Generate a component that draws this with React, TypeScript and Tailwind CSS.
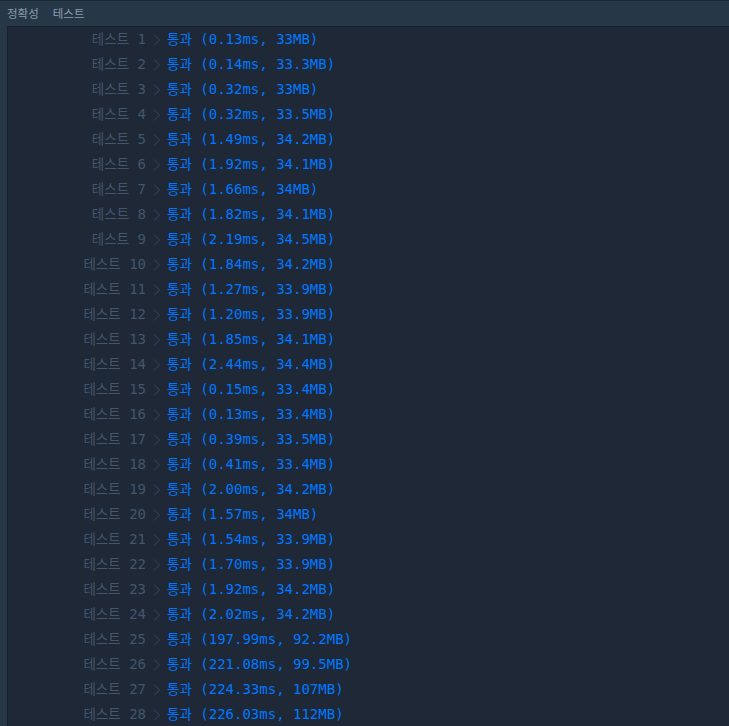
import React from 'react'

const results = [
  ['0.13ms', '33MB'],
  ['0.14ms', '33.3MB'],
  ['0.32ms', '33MB'],
  ['0.32ms', '33.5MB'],
  ['1.49ms', '34.2MB'],
  ['1.92ms', '34.1MB'],
  ['1.66ms', '34MB'],
  ['1.82ms', '34.1MB'],
  ['2.19ms', '34.5MB'],
  ['1.84ms', '34.2MB'],
  ['1.27ms', '33.9MB'],
  ['1.20ms', '33.9MB'],
  ['1.85ms', '34.1MB'],
  ['2.44ms', '34.4MB'],
  ['0.15ms', '33.4MB'],
  ['0.13ms', '33.4MB'],
  ['0.39ms', '33.5MB'],
  ['0.41ms', '33.4MB'],
  ['2.00ms', '34.2MB'],
  ['1.57ms', '34MB'],
  ['1.54ms', '33.9MB'],
  ['1.70ms', '33.9MB'],
  ['1.92ms', '34.2MB'],
  ['2.02ms', '34.2MB'],
  ['197.99ms', '92.2MB'],
  ['221.08ms', '99.5MB'],
  ['224.33ms', '107MB'],
  ['226.03ms', '112MB'],
]

const mono = "font-['DejaVu_Sans_Mono','Noto_Sans_CJK_KR',monospace]"

const Chevron = () => (
  <svg width="21" height="14" viewBox="0 0 21 14" className="shrink-0">
    <polyline points="8,1.5 13.5,7 8,12.5" fill="none" stroke="#2e3c4d" strokeWidth="1.2" />
  </svg>
)

const App = () => {
  return (
    <div className="w-[729px] h-[726px] bg-[#263747] flex flex-col overflow-hidden font-['Noto_Sans_CJK_KR',sans-serif]">
      {/* tabs */}
      <div className="h-[26px] shrink-0 border-t border-[#1b2532] flex items-center gap-[14px] pl-[7px] text-[11.5px] text-[#8d9db0]">
        <span>정확성</span>
        <span>테스트</span>
      </div>

      {/* results */}
      <div className="flex-1 ml-[7px] bg-[#1e2837] border-t border-l border-[#18202c]">
        {results.map(([time, mem], i) => (
          <div key={i} className={`h-[25px] flex items-center text-[14px] ${mono}`}>
            <span className="w-[138px] text-right text-[#43566b] whitespace-pre">
              <span className="text-[13.5px]">테스트</span> {i + 1}
            </span>
            <Chevron />
            <span className="text-[#0078ff] whitespace-pre">
              <span className="text-[13.5px]">통과</span> ({time}, {mem})
            </span>
          </div>
        ))}
      </div>
    </div>
  )
}

export default App
